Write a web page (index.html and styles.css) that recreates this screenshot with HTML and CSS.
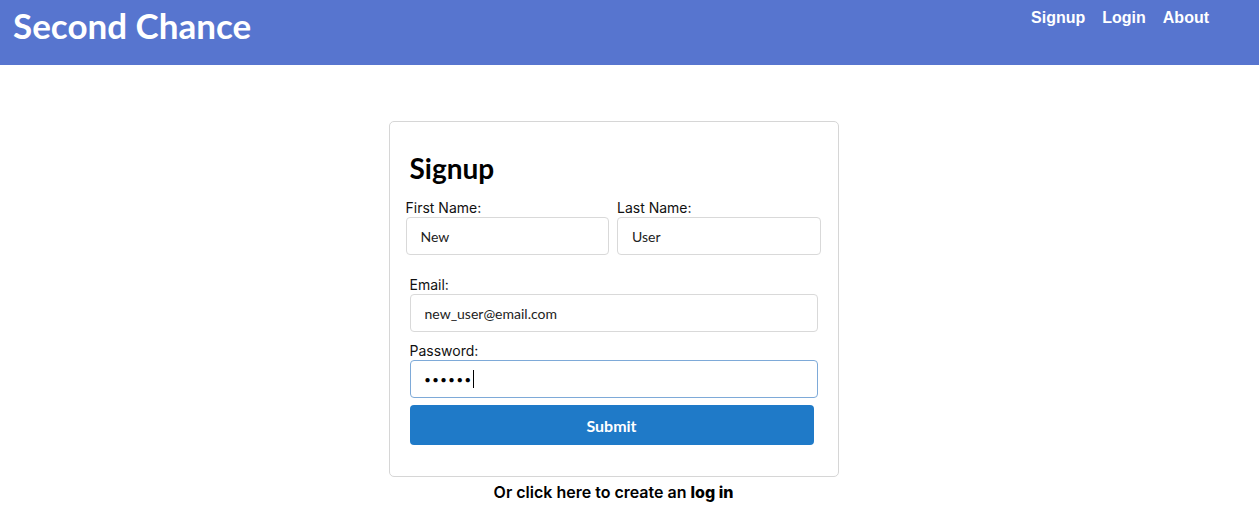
FILE: index.html
```html
<!DOCTYPE html>
<html>
<head>
<meta charset="utf-8">
<link rel="stylesheet" href="styles.css">
</head>
<body>
<header class="topbar">
  <div class="brand">Second Chance</div>
  <nav class="nav">
    <a href="#">Signup</a>
    <a href="#">Login</a>
    <a href="#">About</a>
  </nav>
</header>
<main class="main">
  <form class="card">
    <h2 class="title">Signup</h2>
    <div class="name-row">
      <div class="field">
        <label>First Name:</label>
        <input class="input" type="text" value="New">
      </div>
      <div class="field">
        <label>Last Name:</label>
        <input class="input" type="text" value="User">
      </div>
    </div>
    <div class="field email">
      <label>Email:</label>
      <input class="input" type="text" value="new_user@email.com">
    </div>
    <div class="field pw">
      <label>Password:</label>
      <div class="input focused"><span class="dots">●●●●●●</span><span class="caret"></span></div>
    </div>
    <button class="submit" type="button">Submit</button>
  </form>
  <p class="alt">Or click here to create an <b>log in</b></p>
</main>
</body>
</html>
```
FILE: styles.css
```css
* { box-sizing: border-box; }
body {
  margin: 0;
  font-family: "Lato", "Liberation Sans", sans-serif;
  background: #fff;
  color: #000;
}
.topbar {
  height: 65px;
  background: #5775cf;
  display: flex;
  justify-content: space-between;
  align-items: flex-start;
  padding: 0 50px 0 13px;
}
.brand {
  font-family: "Lato", sans-serif;
  font-weight: 700;
  font-size: 35px;
  color: #fff;
  line-height: 50px;
}
.nav {
  display: flex;
  gap: 17px;
  padding-top: 8px;
}
.nav a {
  font-family: "Liberation Sans", Arial, sans-serif;
  font-weight: 700;
  font-size: 16px;
  color: #fff;
  text-decoration: none;
  line-height: 20px;
}
.main {
  display: flex;
  flex-direction: column;
  align-items: center;
  padding-top: 56px;
  padding-right: 32px;
}
.card {
  width: 450px;
  border: 1px solid #d6d6d6;
  border-radius: 5px;
  padding: 28px 20px 31px 20px;
  display: flex;
  flex-direction: column;
}
.title {
  font-family: "Lato", sans-serif;
  font-weight: 700;
  font-size: 28px;
  margin: 0 0 13px 0;
  line-height: 36px;
}
.name-row {
  display: flex;
  gap: 8px;
  margin: 0 -3px 0 -4px;
}
.name-row .field { flex: 1; }
.field { display: flex; flex-direction: column; }
.field label {
  font-family: "Inter", "Liberation Sans", sans-serif;
  font-size: 14px;
  line-height: 18px;
  color: #111;
}
.input {
  height: 38px;
  border: 1px solid #d9d9d9;
  border-radius: 4px;
  padding: 0 14px;
  font-family: "Lato", sans-serif;
  font-size: 14px;
  color: #222;
  background: #fff;
  width: 100%;
  outline: none;
}
.email { margin-top: 21px; }
.pw { margin-top: 10px; }
.focused {
  border-color: #7eaad8;
  display: flex;
  align-items: center;
}
.dots {
  font-family: "Liberation Sans", sans-serif;
  font-size: 10px;
  letter-spacing: 2px;
  color: #000;
}
.caret {
  width: 1px;
  height: 18px;
  background: #000;
}
.submit {
  margin-top: 7px;
  width: 404px;
  height: 40px;
  border: none;
  border-radius: 4px;
  background: #1f7ac8;
  color: #fff;
  font-family: "Lato", sans-serif;
  font-weight: 700;
  font-size: 16px;
  cursor: pointer;
}
.alt {
  margin: 5px 0 0 0;
  font-family: "Inter", "Liberation Sans", sans-serif;
  font-weight: 600;
  font-size: 16px;
  line-height: 20px;
}
.alt b { font-weight: 800; }
```
